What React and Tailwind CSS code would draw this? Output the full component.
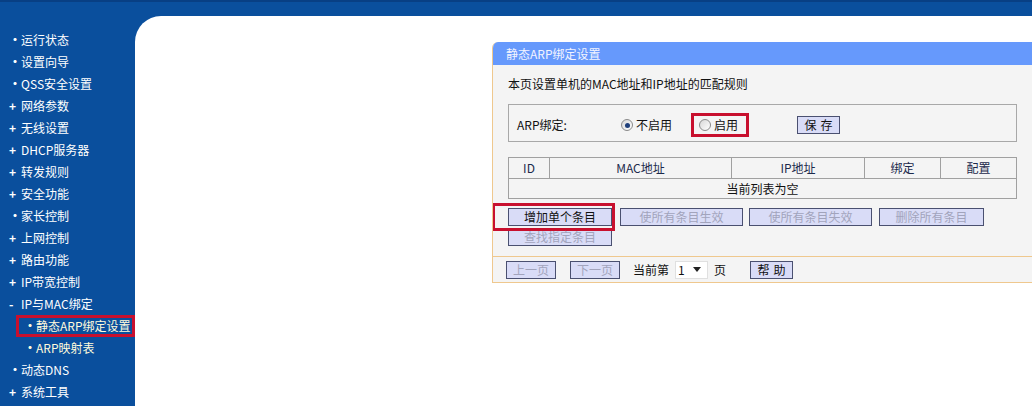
import React from "react";

const menu = [
  { mark: "•", label: "运行状态" },
  { mark: "•", label: "设置向导" },
  { mark: "•", label: "QSS安全设置" },
  { mark: "+", label: "网络参数" },
  { mark: "+", label: "无线设置" },
  { mark: "+", label: "DHCP服务器" },
  { mark: "+", label: "转发规则" },
  { mark: "+", label: "安全功能" },
  { mark: "•", label: "家长控制" },
  { mark: "+", label: "上网控制" },
  { mark: "+", label: "路由功能" },
  { mark: "+", label: "IP带宽控制" },
  { mark: "-", label: "IP与MAC绑定" },
  { mark: "•", label: "静态ARP绑定设置", sub: true, active: true },
  { mark: "•", label: "ARP映射表", sub: true },
  { mark: "•", label: "动态DNS" },
  { mark: "+", label: "系统工具" },
];

const font = { fontFamily: "'SimSun', 'Noto Sans CJK SC', sans-serif" };

function Btn({ children, disabled, className = "" }) {
  return (
    <div
      className={
        "h-[18px] flex items-center justify-center border border-[#4a5070] bg-[#d9dcf7] text-[12px] leading-none " +
        (disabled ? "text-[#a2a4bc] " : "text-[#111] ") +
        className
      }
    >
      {children}
    </div>
  );
}

function Radio({ checked }) {
  return (
    <span className="w-[12px] h-[12px] rounded-full border border-[#8a8a8a] bg-gradient-to-br from-[#d8d8d8] to-[#ffffff] flex items-center justify-center">
      {checked && <span className="w-[5px] h-[5px] rounded-full bg-[#1f3f7a]" />}
    </span>
  );
}

export default function App() {
  return (
    <div className="w-[1032px] h-[406px] overflow-hidden bg-[#0a4f9d] flex flex-col" style={font}>
      <div className="h-[2px] bg-[#083f84]" />
      <div className="flex flex-1 pt-[14px]">
        <div className="w-[136px] pt-[13px]">
          {menu.map((m) => (
            <div key={m.label} className="h-[22px] flex items-center">
              <div
                className={
                  "flex items-center h-[22px] " +
                  (m.active
                    ? "ml-[16px] w-[119px] border-[3px] border-[#c8102e] pl-[5px]"
                    : m.sub
                    ? "pl-[24px]"
                    : "pl-[9px]")
                }
              >
                <span className={"w-[12px] text-[12px] font-bold " + (m.sub ? "text-[#fffbdc]" : "text-white")}>
                  {m.mark}
                </span>
                <span className={"text-[12px] " + (m.sub ? "text-[#fffbdc]" : "text-white")}>{m.label}</span>
              </div>
            </div>
          ))}
        </div>
        <div className="flex-1 bg-white rounded-tl-[26px] flex">
          <div className="ml-[357px] mt-[26px] flex-1 flex flex-col">
            <div className="border-l border-[#efc88e] bg-[#f4f4f4] flex flex-col w-[560px] rounded-tl-[6px] overflow-hidden">
              <div className="h-[23px] bg-[#6699fc] flex items-center pl-[13px] text-[12px] text-[#f2f4ff]">
                静态ARP绑定设置
              </div>
              <div className="pl-[15px] pt-[12px]">
                <div className="text-[12px] text-[#111] h-[14px] leading-[14px]">
                  本页设置单机的MAC地址和IP地址的匹配规则
                </div>
                <div className="mt-[13px] w-[509px] h-[38px] pt-[4px] border border-[#a8a8a8] flex items-center text-[12px] text-[#111]">
                  <span className="ml-[8px] w-[104px]">ARP绑定:</span>
                  <Radio checked />
                  <span className="ml-[3px]">不启用</span>
                  <div className="ml-[19px] h-[24px] w-[58px] border-[3px] border-[#c8102e] flex items-center pl-[5px]">
                    <Radio />
                    <span className="ml-[3px]">启用</span>
                  </div>
                  <Btn className="ml-[48px] w-[43px] tracking-[4px] pl-[4px]">保存</Btn>
                </div>
                <div className="mt-[15px] w-[509px] border border-[#a0a0a0] text-[12px] text-[#1c2a4c]">
                  <div className="flex h-[21px] border-b border-[#a0a0a0]">
                    <div className="w-[41px] border-r border-[#a0a0a0] flex items-center justify-center">ID</div>
                    <div className="w-[182px] border-r border-[#a0a0a0] flex items-center justify-center">MAC地址</div>
                    <div className="w-[133px] border-r border-[#a0a0a0] flex items-center justify-center">IP地址</div>
                    <div className="w-[76px] border-r border-[#a0a0a0] flex items-center justify-center">绑定</div>
                    <div className="flex-1 flex items-center justify-center">配置</div>
                  </div>
                  <div className="h-[19px] flex items-center justify-center text-[#111]">当前列表为空</div>
                </div>
                <div className="mt-[4px] flex items-center">
                  <div className="-ml-[16px] w-[123px] h-[28px] border-[3px] border-[#c8102e] flex items-center pl-[13px]">
                    <Btn className="w-[104px]">增加单个条目</Btn>
                  </div>
                  <Btn disabled className="ml-[5px] w-[123px]">使所有条目生效</Btn>
                  <Btn disabled className="ml-[6px] w-[123px]">使所有条目失效</Btn>
                  <Btn disabled className="ml-[7px] w-[105px]">删除所有条目</Btn>
                </div>
                <Btn disabled className="w-[104px] -mt-[3px]">查找指定条目</Btn>
              </div>
              <div className="mt-[10px] border-t border-[#efc88e]" />
              <div className="h-[26px] flex items-center pl-[13px] text-[12px] text-[#111] border-b border-[#efc88e]">
                <Btn disabled className="w-[50px]">上一页</Btn>
                <Btn disabled className="ml-[14px] w-[50px]">下一页</Btn>
                <span className="ml-[13px]">当前第</span>
                <div className="ml-[6px] w-[33px] h-[18px] bg-white border border-[#e0e0e0] flex items-center pl-[2px]">
                  <span>1</span>
                  <svg className="ml-[8px]" width="8" height="5" viewBox="0 0 8 5">
                    <path d="M0 0 H8 L4 5 Z" fill="#222" />
                  </svg>
                </div>
                <span className="ml-[6px]">页</span>
                <Btn className="ml-[24px] w-[43px] tracking-[4px] pl-[4px]">帮助</Btn>
              </div>
            </div>
          </div>
        </div>
      </div>
    </div>
  );
}
